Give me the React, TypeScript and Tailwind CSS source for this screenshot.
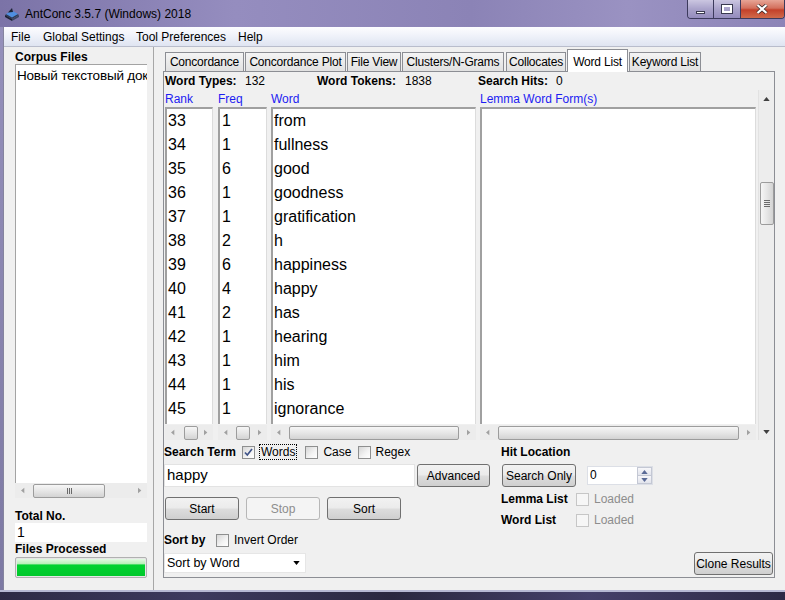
import React from 'react';

const rows: [string, string, string][] = [
  ['33', '1', 'from'],
  ['34', '1', 'fullness'],
  ['35', '6', 'good'],
  ['36', '1', 'goodness'],
  ['37', '1', 'gratification'],
  ['38', '2', 'h'],
  ['39', '6', 'happiness'],
  ['40', '4', 'happy'],
  ['41', '2', 'has'],
  ['42', '1', 'hearing'],
  ['43', '1', 'him'],
  ['44', '1', 'his'],
  ['45', '1', 'ignorance'],
];

const Icons = {
  App: () => (
    <svg viewBox="0 0 16 16" className="w-[16px] h-[16px]">
      <path d="M1 9 L8 5 L15 9 L8 13 Z" fill="#2f3a55" />
      <path d="M2 8 L8 4.5 L14 8 L8 11.5 Z" fill="#4f8fe0" />
      <path d="M4 6.5 L8 2 L9 6 Z" fill="#1d2436" />
      <path d="M1 9 L8 13 L8 15 L1 11 Z" fill="#1c2233" />
      <path d="M8 13 L15 9 L15 11 L8 15 Z" fill="#3b4663" />
    </svg>
  ),
  Check: () => (
    <svg viewBox="0 0 11 11" className="w-[11px] h-[11px]">
      <path d="M2 5.5 L4.3 8 L9 2" fill="none" stroke="#3f5388" strokeWidth="1.7" />
    </svg>
  ),
  Left: ({ c = '#a0a0a0' }: { c?: string }) => (
    <svg viewBox="0 0 6 8" className="w-[4px] h-[7px]">
      <path d="M5 0 L0 4 L5 8 Z" fill={c} />
    </svg>
  ),
  Right: ({ c = '#a0a0a0' }: { c?: string }) => (
    <svg viewBox="0 0 6 8" className="w-[4px] h-[7px]">
      <path d="M0 0 L5 4 L0 8 Z" fill={c} />
    </svg>
  ),
  Up: ({ c = '#404040' }: { c?: string }) => (
    <svg viewBox="0 0 8 5" className="w-[7px] h-[4px]">
      <path d="M0 5 L4 0 L8 5 Z" fill={c} />
    </svg>
  ),
  Down: ({ c = '#404040' }: { c?: string }) => (
    <svg viewBox="0 0 8 5" className="w-[7px] h-[4px]">
      <path d="M0 0 L4 5 L8 0 Z" fill={c} />
    </svg>
  ),
};

const btnBg = 'border-[#707070] bg-[linear-gradient(#f2f2f2_0%,#ebebeb_48%,#dddddd_52%,#cfcfcf_100%)]';

function Btn({ className = '', disabled = false, children }: { className?: string; disabled?: boolean; children: React.ReactNode }) {
  return (
    <div
      className={`h-[23px] flex items-center justify-center rounded-[3px] border shrink-0 whitespace-nowrap ${
        disabled ? 'border-[#b7b7b7] bg-[#f4f4f4] text-[#8d8d8d]' : btnBg
      } ${className}`}
    >
      {children}
    </div>
  );
}

function Box({ checked = false, disabled = false }: { checked?: boolean; disabled?: boolean }) {
  return (
    <span
      className={`w-[13px] h-[13px] shrink-0 border flex items-center justify-center ${
        disabled
          ? 'border-[#c6c6c6] bg-[#f6f6f6]'
          : 'border-[#8e8f8f] bg-[linear-gradient(135deg,#d6d6d6_0%,#f4f4f4_60%,#ffffff_100%)]'
      }`}
    >
      {checked && <Icons.Check />}
    </span>
  );
}

function HScroll({ w, pre, thumb, grip = false }: { w: string; pre: string; thumb: string; grip?: boolean }) {
  return (
    <div className={`${w} h-[15px] flex items-center bg-[#ececec] shrink-0`}>
      <div className="w-[15px] h-[15px] flex items-center justify-center shrink-0">
        <Icons.Left />
      </div>
      <div className={`${pre} shrink-0`} />
      <div
        className={`${thumb} h-[14px] shrink-0 rounded-[2px] border border-[#9c9c9c] bg-[linear-gradient(#f6f6f6_0%,#e6e6e6_50%,#d3d3d3_100%)] flex items-center justify-center`}
      >
        {grip && (
          <div className="flex gap-[1px]">
            <div className="w-px h-[6px] bg-[#6a6a6a]" />
            <div className="w-px h-[6px] bg-[#6a6a6a]" />
            <div className="w-px h-[6px] bg-[#6a6a6a]" />
          </div>
        )}
      </div>
      <div className="flex-1" />
      <div className="w-[15px] h-[15px] flex items-center justify-center shrink-0">
        <Icons.Right />
      </div>
    </div>
  );
}

function TitleBar() {
  return (
    <div className="h-[27px] flex shrink-0 bg-[linear-gradient(90deg,#7b73a7_0%,#958dbf_30%,#8b83b6_60%,#9a92c2_80%,#8c84b7_100%)]">
      <div className="flex items-center pl-[4px] gap-[5px]">
        <Icons.App />
        <span className="text-[12px] text-black">AntConc 3.5.7 (Windows) 2018</span>
      </div>
      <div className="ml-auto flex h-[19px] border border-t-0 border-[#3c3a5c] rounded-b-[4px] overflow-hidden shrink-0 w-[98px]">
        <div className="w-[26px] h-full flex items-end justify-center pb-[4px] bg-[linear-gradient(#cbc6e1_0%,#a9a2ca_50%,#948cbd_100%)] border-r border-[#3c3a5c]">
          <div className="w-[9px] h-[3px] bg-white border border-[#3a3a50]" />
        </div>
        <div className="w-[27px] h-full flex items-center justify-center bg-[linear-gradient(#cbc6e1_0%,#a9a2ca_50%,#948cbd_100%)] border-r border-[#3c3a5c]">
          <div className="w-[10px] h-[8px] border-2 border-white outline outline-1 outline-[#3a3a50]" />
        </div>
        <div className="flex-1 h-full flex items-center justify-center pr-[2px] bg-[linear-gradient(#e7a596_0%,#d3705d_45%,#c3412a_55%,#d06a4a_100%)]">
          <svg viewBox="0 0 12 10" className="w-[12px] h-[10px]">
            <path d="M1.5 1 L10.5 9 M10.5 1 L1.5 9" stroke="#3a2a2a" strokeWidth="3.6" />
            <path d="M1.5 1 L10.5 9 M10.5 1 L1.5 9" stroke="#ffffff" strokeWidth="2.2" />
          </svg>
        </div>
      </div>
    </div>
  );
}

function MenuBar() {
  return (
    <div className="h-[20px] shrink-0 flex items-center border-b border-[#b9bdcc] bg-[linear-gradient(#fdfdff_0%,#eef1f9_50%,#dfe4f1_100%)] text-[12px] whitespace-nowrap">
      <span className="w-[32px] pl-[7px]">File</span>
      <span className="w-[93px] pl-[7px]">Global Settings</span>
      <span className="w-[102px] pl-[7px]">Tool Preferences</span>
      <span className="pl-[7px]">Help</span>
    </div>
  );
}

function LeftPanel() {
  return (
    <div className="w-[149px] shrink-0 flex flex-col pl-[11px] pr-[6px] pt-[3px]">
      <div className="h-[14px] leading-[14px] font-bold">Corpus Files</div>
      <div className="h-[419px] bg-white border-t border-l border-[#a3a3a3] overflow-hidden">
        <div className="pl-[1px] pt-[1px] text-[13.5px] tracking-[-0.2px] leading-[20px] whitespace-nowrap">Новый текстовый док</div>
      </div>
      <HScroll w="w-[132px]" pre="w-[3px]" thumb="w-[72px]" grip />
      <div className="h-[14px] leading-[14px] font-bold mt-[11px]">Total No.</div>
      <div className="h-[19px] bg-white flex items-center pl-[2px] text-[14px]">1</div>
      <div className="h-[14px] leading-[14px] font-bold">Files Processed</div>
      <div className="h-[21px] mt-[1px] rounded-[2px] border border-[#b0b0b0] bg-[#e6e6e6] p-[1px]">
        <div className="h-full bg-[linear-gradient(#e2f9e2_0%,#b6efb6_30%,#00d22f_34%,#00c82b_100%)]" />
      </div>
    </div>
  );
}

const tabs: { label: string; w: string; sel?: boolean }[] = [
  { label: 'Concordance', w: 'w-[79px]' },
  { label: 'Concordance Plot', w: 'w-[101px]' },
  { label: 'File View', w: 'w-[54px]' },
  { label: 'Clusters/N-Grams', w: 'w-[102px]' },
  { label: 'Collocates', w: 'w-[60px]' },
  { label: 'Word List', w: 'w-[61px]', sel: true },
  { label: 'Keyword List', w: 'w-[72px]' },
];

function Column({ label, w, children, scroll }: { label: string; w: string; children: React.ReactNode; scroll: React.ReactNode }) {
  return (
    <div className={`${w} shrink-0 flex flex-col`}>
      <div className="h-[17px] flex items-end text-[#1c1cf2] leading-[14px] pb-[1px] whitespace-nowrap">{label}</div>
      <div className="h-[317px] bg-white border-t-2 border-l-2 border-[#a0a0a0] border-r border-r-[#dcdcdc] overflow-hidden text-[16px]">
        {children}
      </div>
      <div className="h-[1px]" />
      {scroll}
    </div>
  );
}

function RightPanel() {
  return (
    <div className="flex-1 flex flex-col pl-[9px] pr-[10px]">
      <div className="h-[24px] flex items-end pl-[2px] gap-[1px] shrink-0">
        {tabs.map((t) =>
          t.sel ? (
            <div
              key={t.label}
              className={`${t.w} h-[23px] -mb-px relative z-10 bg-white border border-b-0 border-[#8c8e94] flex items-start justify-center pt-[3px] text-[12px] tracking-[-0.2px] whitespace-nowrap shrink-0`}
            >
              {t.label}
            </div>
          ) : (
            <div
              key={t.label}
              className={`${t.w} h-[19px] bg-[linear-gradient(#f4f4f4_0%,#e9e9e9_60%,#e1e1e1_100%)] border border-b-0 border-[#8c8e94] flex items-center justify-center text-[12px] tracking-[-0.2px] whitespace-nowrap shrink-0 ${
                t.label === 'Collocates' ? 'ml-[1px]' : ''
              }`}
            >
              {t.label}
            </div>
          )
        )}
      </div>
      <div className="h-[507px] border border-[#8c8e94] bg-[#f0f0f0] flex flex-col">
        {/* stats */}
        <div className="h-[18px] flex items-center pl-[1px] shrink-0 whitespace-nowrap">
          <span className="w-[80px] font-bold">Word Types:</span>
          <span className="w-[72px]">132</span>
          <span className="w-[88px] font-bold">Word Tokens:</span>
          <span className="w-[73px]">1838</span>
          <span className="w-[78px] font-bold">Search Hits:</span>
          <span>0</span>
        </div>

        {/* lists */}
        <div className="h-[350px] flex pl-[1px] shrink-0">
          <Column label="Rank" w="w-[48px]" scroll={<HScroll w="w-[48px]" pre="w-[4px]" thumb="w-[14px]" />}>
            {rows.map((r) => (
              <div key={r[0]} className="h-[24px] leading-[24px] pl-[1px]">{r[0]}</div>
            ))}
          </Column>
          <div className="w-[5px] shrink-0" />
          <Column label="Freq" w="w-[49px]" scroll={<HScroll w="w-[49px]" pre="w-[3px]" thumb="w-[14px]" />}>
            {rows.map((r) => (
              <div key={r[0]} className="h-[24px] leading-[24px] pl-[2px]">{r[1]}</div>
            ))}
          </Column>
          <div className="w-[4px] shrink-0" />
          <Column label="Word" w="w-[205px]" scroll={<HScroll w="w-[205px]" pre="w-[3px]" thumb="w-[170px]" />}>
            {rows.map((r) => (
              <div key={r[0]} className="h-[24px] leading-[24px] pl-[1px]">{r[2]}</div>
            ))}
          </Column>
          <div className="w-[4px] shrink-0" />
          <Column label="Lemma Word Form(s)" w="w-[276px]" scroll={<HScroll w="w-[276px]" pre="w-[3px]" thumb="w-[241px]" />}>
            <div />
          </Column>
          <div className="w-[2px] shrink-0" />
          {/* vertical scrollbar */}
          <div className="w-[16px] h-[350px] shrink-0 bg-[#ededed] border-l border-[#e2e2e2] flex flex-col items-center">
            <div className="h-[17px] flex items-center justify-center">
              <Icons.Up />
            </div>
            <div className="mt-[75px] w-[14px] h-[43px] rounded-[2px] border border-[#9c9c9c] bg-[linear-gradient(90deg,#f6f6f6_0%,#e6e6e6_50%,#d3d3d3_100%)] flex flex-col items-center justify-center gap-[1px]">
              <div className="w-[6px] h-px bg-[#6a6a6a]" />
              <div className="w-[6px] h-px bg-[#6a6a6a]" />
              <div className="w-[6px] h-px bg-[#6a6a6a]" />
              <div className="w-[6px] h-px bg-[#6a6a6a]" />
            </div>
            <div className="flex-1" />
            <div className="h-[17px] flex items-center justify-center">
              <Icons.Down />
            </div>
          </div>
        </div>

        {/* controls */}
        <div className="flex-1 flex whitespace-nowrap">
          <div className="w-[337px] shrink-0 flex flex-col">
            <div className="mt-[5px] h-[14px] flex items-center">
              <span className="font-bold w-[78px]">Search Term</span>
              <Box checked />
              <span className="ml-[4px] px-[1px] border border-dotted border-black leading-[14px]">Words</span>
              <span className="ml-[8px]"><Box /></span>
              <span className="ml-[5px]">Case</span>
              <span className="ml-[7px]"><Box /></span>
              <span className="ml-[4px]">Regex</span>
            </div>
            <div className="mt-[5px] h-[23px] flex">
              <div className="w-[251px] h-[23px] bg-white border border-[#e3e3e3] flex items-center pl-[2px] text-[15px]">happy</div>
              <Btn className="ml-[2px] w-[73px]">Advanced</Btn>
            </div>
            <div className="mt-[10px] h-[23px] flex pl-[1px]">
              <Btn className="w-[74px]">Start</Btn>
              <Btn disabled className="ml-[7px] w-[74px]">Stop</Btn>
              <Btn className="ml-[7px] w-[74px]">Sort</Btn>
            </div>
            <div className="mt-[13px] h-[14px] flex items-center">
              <span className="font-bold w-[52px]">Sort by</span>
              <Box />
              <span className="ml-[5px]">Invert Order</span>
            </div>
            <div className="mt-[6px] w-[142px] h-[20px] bg-white border border-[#e6e6e6] flex items-center pl-[2px] pr-[5px] text-[12.5px]">
              <span className="flex-1">Sort by Word</span>
              <Icons.Down c="#000000" />
            </div>
          </div>

          <div className="flex-1 flex flex-col">
            <div className="mt-[5px] h-[14px] leading-[14px] font-bold">Hit Location</div>
            <div className="mt-[5px] h-[23px] flex items-center">
              <Btn className="ml-[1px] w-[74px]">Search Only</Btn>
              <div className="ml-[11px] w-[66px] h-[19px] bg-white border border-[#dcdfe6] flex">
                <span className="flex-1 pl-[2px] leading-[16px]">0</span>
                <div className="w-[15px] flex flex-col">
                  <div className="flex-1 flex items-center justify-center border border-[#c4c8d4] bg-[linear-gradient(#f7f7fa,#e2e4ec)]">
                    <Icons.Up c="#5a6a96" />
                  </div>
                  <div className="flex-1 flex items-center justify-center border border-t-0 border-[#c4c8d4] bg-[linear-gradient(#f7f7fa,#e2e4ec)]">
                    <Icons.Down c="#5a6a96" />
                  </div>
                </div>
              </div>
            </div>
            <div className="mt-[5px] h-[14px] flex items-center">
              <span className="w-[75px] font-bold">Lemma List</span>
              <Box disabled />
              <span className="ml-[5px] text-[#8d8d8d]">Loaded</span>
            </div>
            <div className="mt-[7px] h-[14px] flex items-center">
              <span className="w-[75px] font-bold">Word List</span>
              <Box disabled />
              <span className="ml-[5px] text-[#8d8d8d]">Loaded</span>
            </div>
            <div className="mt-auto mb-[2px] mr-[1px] self-end">
              <Btn className="w-[79px]">Clone Results</Btn>
            </div>
          </div>
        </div>
      </div>
    </div>
  );
}

export default function App() {
  return (
    <div className="w-[785px] h-[600px] overflow-hidden flex flex-col bg-[#8c86b3] font-['Liberation_Sans','Noto_Sans',sans-serif] text-[12px] text-black">
      <TitleBar />
      <div className="h-[563px] flex shrink-0">
        <div className="w-[3px] bg-[linear-gradient(#9590bb,#7d79a3)] shrink-0" />
        <div className="flex-1 flex flex-col bg-[#f0f0f0] border-l border-[#85849e]">
          <MenuBar />
          <div className="flex flex-1">
            <LeftPanel />
            <div className="w-px bg-[#a7a7a7] shrink-0" />
            <RightPanel />
          </div>
        </div>
      </div>
      <div className="h-[2px] bg-[#b6b8d3] shrink-0" />
      <div className="flex-1 bg-[linear-gradient(90deg,#2d2a45,#3d3a5e,#2a2840,#45406a,#2d2a45)]" />
    </div>
  );
}
